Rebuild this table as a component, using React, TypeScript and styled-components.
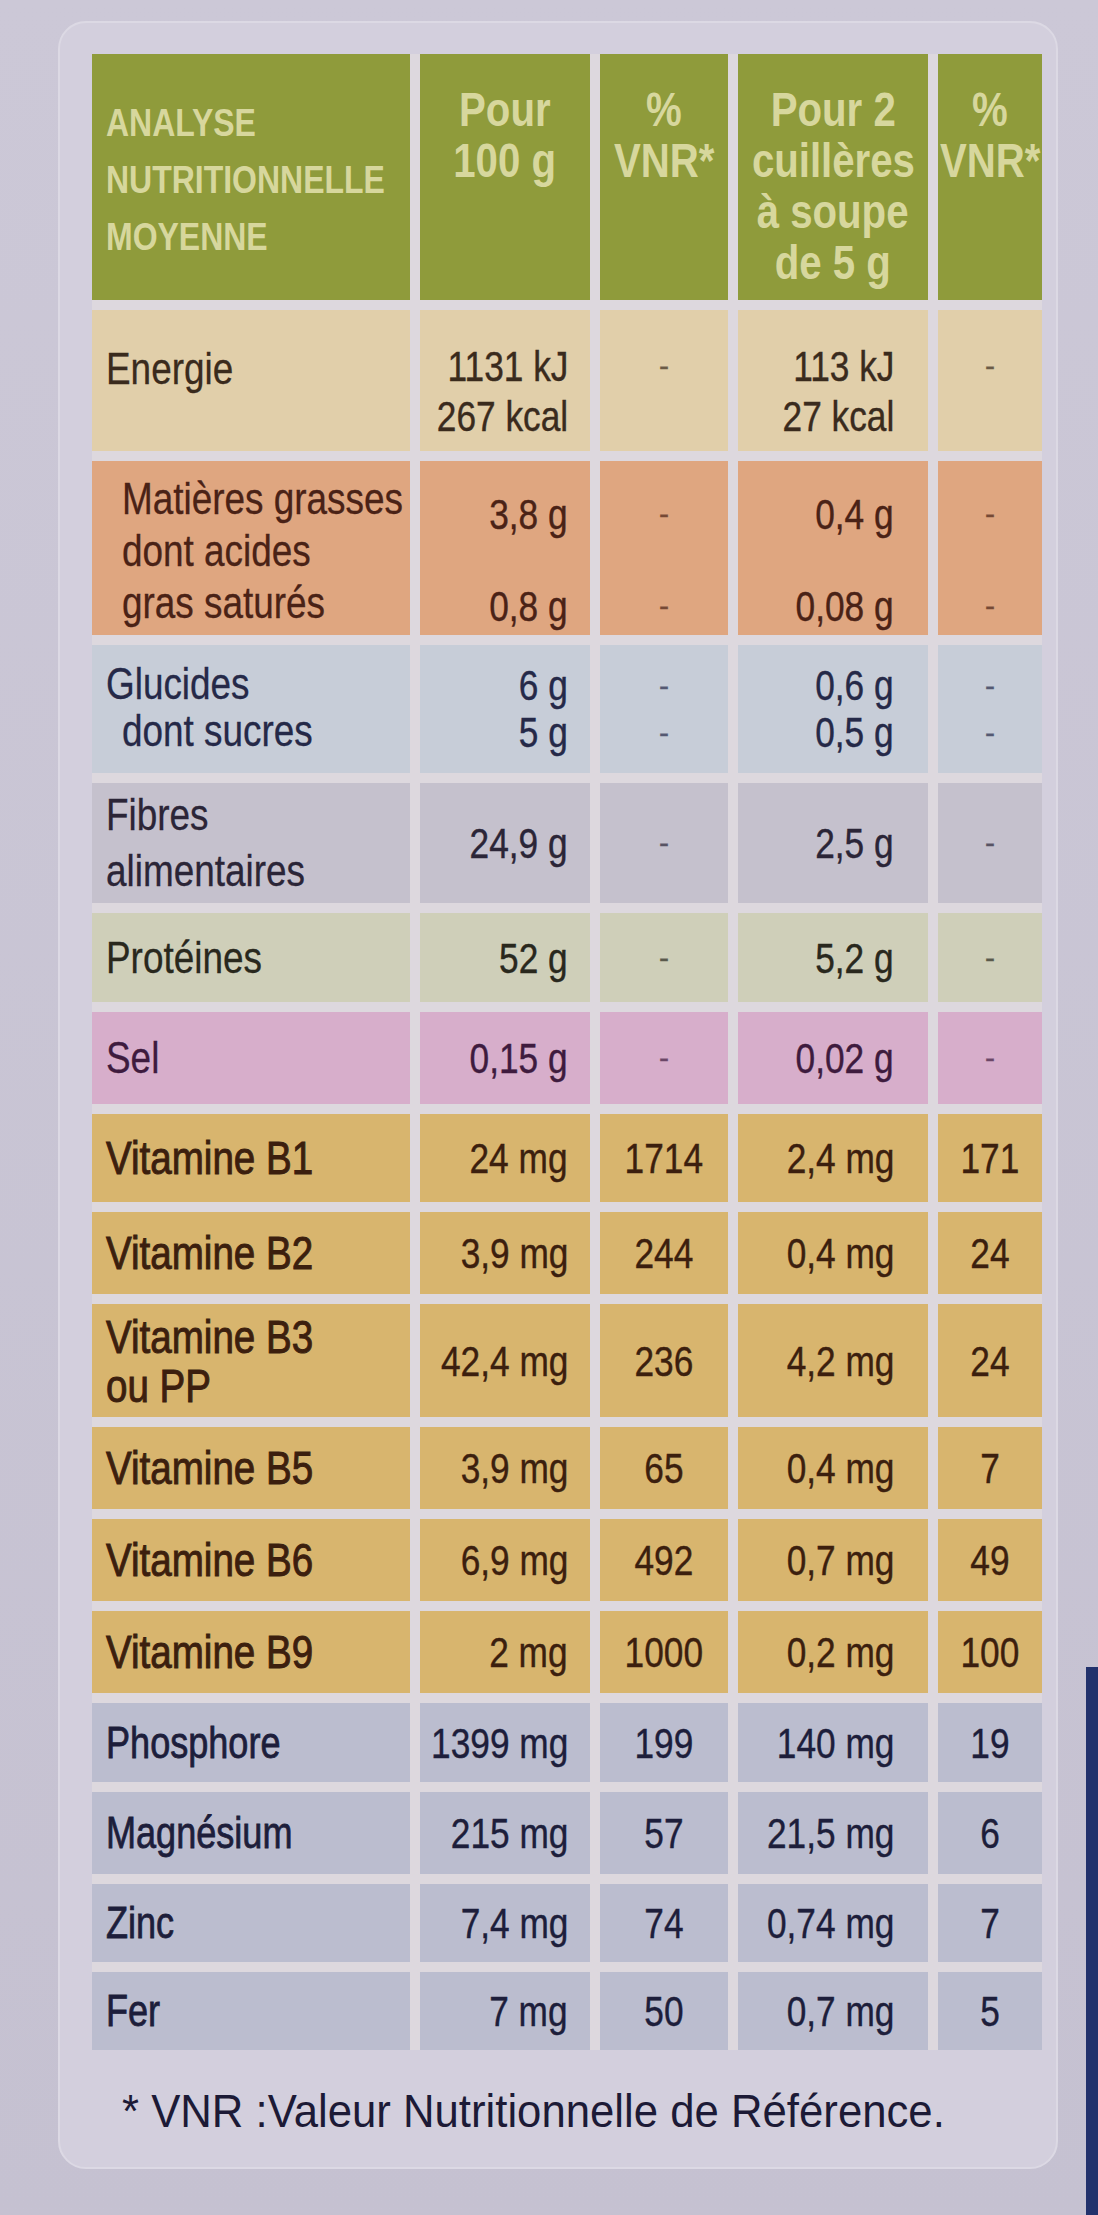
import React from 'react';
import styled, { createGlobalStyle } from 'styled-components';

const GlobalStyle = createGlobalStyle`
  html, body { margin: 0; padding: 0; }
  body {
    background: #c7c3d2;
    font-family: "Liberation Sans", Arial, sans-serif;
  }
`;

type Group = 'energy' | 'fat' | 'carb' | 'fibre' | 'protein' | 'salt' | 'vit' | 'min';
type Origin = 'left' | 'right' | 'center';

const palette: Record<Group, { bg: string; fg: string }> = {
  energy: { bg: '#e1cfaa', fg: '#3a2b1d' },
  fat: { bg: '#dfa680', fg: '#4a2216' },
  carb: { bg: '#c7cdd8', fg: '#252948' },
  fibre: { bg: '#c5c1cd', fg: '#2b2537' },
  protein: { bg: '#cfcfb9', fg: '#29281d' },
  salt: { bg: '#d7aecb', fg: '#3e1b3e' },
  vit: { bg: '#d8b56e', fg: '#3c1f0e' },
  min: { bg: '#bbbdcf', fg: '#1d1e3b' },
};

type Line = { t: string; indent?: boolean };
type Weight = 'plain' | 'vit' | 'min';

interface RowData {
  group: Group;
  h: number;
  lpt?: number;
  vpt?: number;
  lh: number;
  vlh: number;
  kind: Weight;
  label: Line[];
  v1: string[];
  p1: string[];
  v2: string[];
  p2: string[];
}

const L = (t: string, indent = false): Line => ({ t, indent });

const rows: RowData[] = [
  { group: 'energy', kind: 'plain', h: 141, lpt: 34, vpt: 31, lh: 50, vlh: 50, label: [L('Energie')], v1: ['1131 kJ', '267 kcal'], p1: ['-'], v2: ['113 kJ', '27 kcal'], p2: ['-'] },
  { group: 'fat', kind: 'plain', h: 174, lpt: 12, vpt: 30, lh: 52, vlh: 46, label: [L('Matières grasses', true), L('dont acides', true), L('gras saturés', true)], v1: ['3,8 g', '', '0,8 g'], p1: ['-', '', '-'], v2: ['0,4 g', '', '0,08 g'], p2: ['-', '', '-'] },
  { group: 'carb', kind: 'plain', h: 128, lpt: 15, vpt: 17, lh: 47, vlh: 47, label: [L('Glucides'), L('dont sucres', true)], v1: ['6 g', '5 g'], p1: ['-', '-'], v2: ['0,6 g', '0,5 g'], p2: ['-', '-'] },
  { group: 'fibre', kind: 'plain', h: 120, lh: 56, vlh: 50, label: [L('Fibres'), L('alimentaires')], v1: ['24,9 g'], p1: ['-'], v2: ['2,5 g'], p2: ['-'] },
  { group: 'protein', kind: 'plain', h: 89, lh: 50, vlh: 50, label: [L('Protéines')], v1: ['52 g'], p1: ['-'], v2: ['5,2 g'], p2: ['-'] },
  { group: 'salt', kind: 'plain', h: 92, lh: 50, vlh: 50, label: [L('Sel')], v1: ['0,15 g'], p1: ['-'], v2: ['0,02 g'], p2: ['-'] },
  { group: 'vit', kind: 'vit', h: 88, lh: 50, vlh: 50, label: [L('Vitamine B1')], v1: ['24 mg'], p1: ['1714'], v2: ['2,4 mg'], p2: ['171'] },
  { group: 'vit', kind: 'vit', h: 82, lh: 50, vlh: 50, label: [L('Vitamine B2')], v1: ['3,9 mg'], p1: ['244'], v2: ['0,4 mg'], p2: ['24'] },
  { group: 'vit', kind: 'vit', h: 113, lh: 49, vlh: 50, label: [L('Vitamine B3'), L('ou PP')], v1: ['42,4 mg'], p1: ['236'], v2: ['4,2 mg'], p2: ['24'] },
  { group: 'vit', kind: 'vit', h: 82, lh: 50, vlh: 50, label: [L('Vitamine B5')], v1: ['3,9 mg'], p1: ['65'], v2: ['0,4 mg'], p2: ['7'] },
  { group: 'vit', kind: 'vit', h: 82, lh: 50, vlh: 50, label: [L('Vitamine B6')], v1: ['6,9 mg'], p1: ['492'], v2: ['0,7 mg'], p2: ['49'] },
  { group: 'vit', kind: 'vit', h: 82, lh: 50, vlh: 50, label: [L('Vitamine B9')], v1: ['2 mg'], p1: ['1000'], v2: ['0,2 mg'], p2: ['100'] },
  { group: 'min', kind: 'min', h: 79, lh: 50, vlh: 50, label: [L('Phosphore')], v1: ['1399 mg'], p1: ['199'], v2: ['140 mg'], p2: ['19'] },
  { group: 'min', kind: 'min', h: 82, lh: 50, vlh: 50, label: [L('Magnésium')], v1: ['215 mg'], p1: ['57'], v2: ['21,5 mg'], p2: ['6'] },
  { group: 'min', kind: 'min', h: 78, lh: 50, vlh: 50, label: [L('Zinc')], v1: ['7,4 mg'], p1: ['74'], v2: ['0,74 mg'], p2: ['7'] },
  { group: 'min', kind: 'min', h: 78, lh: 50, vlh: 50, label: [L('Fer')], v1: ['7 mg'], p1: ['50'], v2: ['0,7 mg'], p2: ['5'] },
];

const labelSize: Record<Weight, number> = { plain: 45, vit: 47, min: 44 };
const labelStroke: Record<Weight, string> = { plain: '0.3px', vit: '1px', min: '0.8px' };

const Page = styled.div`
  width: 1098px;
  min-height: 2215px;
  box-sizing: border-box;
  padding: 21px 0 0 58px;
  background:
    linear-gradient(#22316c, #22316c) right bottom / 12px 548px no-repeat,
    linear-gradient(180deg, #ccc8d7 0%, #c5c1d1 100%);
`;

const Card = styled.div`
  width: 1000px;
  height: 2148px;
  box-sizing: border-box;
  padding: 31px 14px 0 32px;
  background: #d3cfdd;
  border: 2px solid #dcd9e4;
  border-radius: 28px;
  display: flex;
  flex-direction: column;
`;

const Table = styled.div`
  display: flex;
  flex-direction: column;
  gap: 10px;
  background: #ddd8de;
`;

const Row = styled.div<{ $h: number }>`
  display: grid;
  grid-template-columns: 318px 170px 128px 190px 104px;
  column-gap: 10px;
  height: ${p => p.$h}px;
`;

/* the label face is a condensed sans: narrow the regular face */
const Txt = styled.span<{ $o: Origin; $sx?: number }>`
  display: inline-block;
  transform: scaleX(${p => p.$sx ?? 0.82});
  transform-origin: ${p => p.$o} center;
`;

const CellBase = styled.div<{ $bg: string; $fg: string; $pt?: number; $lh: number }>`
  background: ${p => p.$bg};
  color: ${p => p.$fg};
  display: flex;
  flex-direction: column;
  justify-content: ${p => (p.$pt === undefined ? 'center' : 'flex-start')};
  padding-top: ${p => p.$pt ?? 0}px;
  line-height: ${p => p.$lh}px;
  box-sizing: border-box;
  white-space: nowrap;
  min-width: 0;
`;

const LabelCell = styled(CellBase)<{ $kind: Weight }>`
  padding-left: 14px;
  align-items: flex-start;
  font-size: ${p => labelSize[p.$kind]}px;
  -webkit-text-stroke: ${p => labelStroke[p.$kind]} currentColor;
`;

const LabelLine = styled.span<{ $indent?: boolean }>`
  display: block;
  padding-left: ${p => (p.$indent ? 16 : 0)}px;
`;

const ValueCell = styled(CellBase)<{ $pr: number }>`
  align-items: flex-end;
  padding-right: ${p => p.$pr}px;
  font-size: 43px;
  -webkit-text-stroke: 0.4px currentColor;
`;

const PctCell = styled(CellBase)`
  align-items: center;
  font-size: 43px;
  -webkit-text-stroke: 0.4px currentColor;
`;

const ValueLine = styled.span`
  display: block;
`;

const Dash = styled.span`
  display: block;
  font-size: 30px;
  opacity: 0.7;
`;

const HeaderRow = styled.div`
  display: grid;
  grid-template-columns: 318px 170px 128px 190px 104px;
  column-gap: 10px;
  height: 246px;
`;

const HeaderBase = styled.div`
  background: #8f9b3b;
  color: #d7d79d;
  font-weight: 700;
  white-space: nowrap;
  display: flex;
  flex-direction: column;
`;

const HeaderLead = styled(HeaderBase)`
  font-size: 39px;
  line-height: 57px;
  padding: 40px 0 0 14px;
  text-transform: uppercase;
  align-items: flex-start;
`;

const HeaderCell = styled(HeaderBase)`
  font-size: 49px;
  line-height: 51px;
  padding-top: 30px;
  align-items: center;
`;

const Footnote = styled.p`
  margin: 36px 0 0 30px;
  font-size: 47px;
  line-height: 50px;
  color: #1c1a36;
  white-space: nowrap;
`;

const Lines: React.FC<{ items: string[]; o: Origin }> = ({ items, o }) => (
  <>
    {items.map((t, i) =>
      t === '-' ? (
        <Dash key={i}>-</Dash>
      ) : (
        <ValueLine key={i}>
          {t === '' ? '\u00a0' : <Txt $o={o}>{t}</Txt>}
        </ValueLine>
      )
    )}
  </>
);

const NutritionRow: React.FC<{ r: RowData }> = ({ r }) => {
  const c = palette[r.group];
  return (
    <Row $h={r.h}>
      <LabelCell $bg={c.bg} $fg={c.fg} $pt={r.lpt} $lh={r.lh} $kind={r.kind}>
        {r.label.map((l, i) => (
          <LabelLine key={i} $indent={l.indent}>
            <Txt $o="left">{l.t}</Txt>
          </LabelLine>
        ))}
      </LabelCell>
      <ValueCell $bg={c.bg} $fg={c.fg} $pt={r.vpt} $lh={r.vlh} $pr={22}>
        <Lines items={r.v1} o="right" />
      </ValueCell>
      <PctCell $bg={c.bg} $fg={c.fg} $pt={r.vpt} $lh={r.vlh}>
        <Lines items={r.p1} o="center" />
      </PctCell>
      <ValueCell $bg={c.bg} $fg={c.fg} $pt={r.vpt} $lh={r.vlh} $pr={34}>
        <Lines items={r.v2} o="right" />
      </ValueCell>
      <PctCell $bg={c.bg} $fg={c.fg} $pt={r.vpt} $lh={r.vlh}>
        <Lines items={r.p2} o="center" />
      </PctCell>
    </Row>
  );
};

const HeadLines: React.FC<{ items: string[]; o: Origin }> = ({ items, o }) => (
  <>
    {items.map((t, i) => (
      <ValueLine key={i}>
        <Txt $o={o}>{t}</Txt>
      </ValueLine>
    ))}
  </>
);

export default function App() {
  return (
    <Page>
      <GlobalStyle />
      <Card>
        <Table>
          <HeaderRow>
            <HeaderLead>
              <HeadLines items={['Analyse', 'Nutritionnelle', 'Moyenne']} o="left" />
            </HeaderLead>
            <HeaderCell>
              <HeadLines items={['Pour', '100 g']} o="center" />
            </HeaderCell>
            <HeaderCell>
              <HeadLines items={['%', 'VNR*']} o="center" />
            </HeaderCell>
            <HeaderCell>
              <HeadLines items={['Pour 2', 'cuillères', 'à soupe', 'de 5 g']} o="center" />
            </HeaderCell>
            <HeaderCell>
              <HeadLines items={['%', 'VNR*']} o="center" />
            </HeaderCell>
          </HeaderRow>
          {rows.map((r, i) => (
            <NutritionRow key={i} r={r} />
          ))}
        </Table>
        <Footnote>
          <Txt $o="left" $sx={0.93}>* VNR :Valeur Nutritionnelle de Référence.</Txt>
        </Footnote>
      </Card>
    </Page>
  );
}
